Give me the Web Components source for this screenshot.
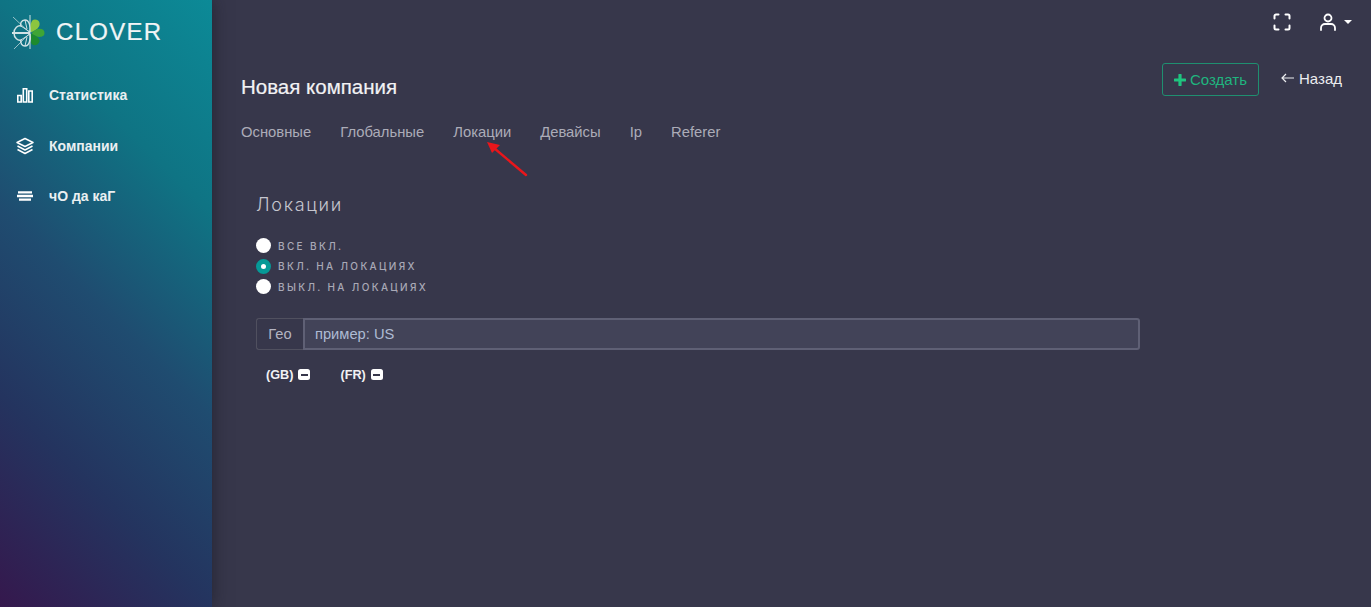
<!DOCTYPE html>
<html lang="ru">
<head>
<meta charset="utf-8">
<title>Clover</title>
<style>
  html, body { margin: 0; height: 100%; }
  body { background: #37374b; font-family: "Liberation Sans", Arial, sans-serif; overflow: hidden; }
</style>
</head>
<body>
<app-shell>
  <side-bar slot="side">
    <nav-item icon="chart">Статистика</nav-item>
    <nav-item icon="layers">Компании</nav-item>
    <nav-item icon="lines">чО да каГ</nav-item>
  </side-bar>
  <top-bar slot="top"></top-bar>
  <page-head slot="main">Новая компания</page-head>
  <tab-bar slot="main">
    <span>Основные</span><span>Глобальные</span><span>Локации</span><span>Девайсы</span><span>Ip</span><span>Referer</span>
  </tab-bar>
  <location-panel slot="main" title="Локации">
    <radio-option>все вкл.</radio-option>
    <radio-option checked>вкл. на локациях</radio-option>
    <radio-option>выкл. на локациях</radio-option>
    <geo-input slot="input" label="Гео" placeholder="пример: US"></geo-input>
    <geo-tag slot="tags">(GB)</geo-tag>
    <geo-tag slot="tags">(FR)</geo-tag>
  </location-panel>
</app-shell>

<script>
function define(name, html, cls) {
  const t = document.createElement('template');
  t.innerHTML = html;
  customElements.define(name, class extends (cls || HTMLElement) {
    constructor() {
      super();
      this.attachShadow({ mode: 'open' }).appendChild(t.content.cloneNode(true));
      if (this.init) this.init();
    }
  });
}

define('app-shell', `
  <style>
    :host { display: flex; height: 607px; width: 1371px; overflow: hidden; position: relative; }
    .side { flex: 0 0 212px; position: relative; z-index: 1; box-shadow: 0 0 16px rgba(20, 20, 30, .55); }
    .body { flex: 1; min-width: 0; display: flex; flex-direction: column; }
    .main { padding: 0 29px; display: flex; flex-direction: column; }
    .arrow { position: absolute; left: 485px; top: 140px; }
  </style>
  <div class="side"><slot name="side"></slot></div>
  <div class="body">
    <slot name="top"></slot>
    <div class="main"><slot name="main"></slot></div>
  </div>
  <svg class="arrow" width="46" height="40" viewBox="0 0 46 40">
    <path d="M41 35 L9 8" stroke="#e9161b" stroke-width="2.4" stroke-linecap="round"/>
    <path d="M2 2 L15 5 L7 13 Z" fill="#e9161b"/>
  </svg>
`);

define('side-bar', `
  <style>
    :host {
      display: block; height: 607px; box-sizing: border-box;
      background: linear-gradient(45deg, #35184d 0%, #24345f 26%, #1f4c70 49%, #0f7484 74%, #0c8a97 100%);
    }
    .brand { display: flex; align-items: center; height: 64px; padding-left: 12px; gap: 11px; }
    .name { color: #f1f5f6; font: 24px/1 "Liberation Sans", Arial, sans-serif; letter-spacing: 1.3px; -webkit-text-stroke: .2px #f1f5f6; }
    nav { display: flex; flex-direction: column; }
  </style>
  <div class="brand">
    <svg width="33" height="36" viewBox="0 0 33 36">
      <g stroke="#e6eff1" fill="none" opacity=".9">
        <path d="M18 1V35" stroke-width="1"/>
        <path d="M0 19H18" stroke-width="2"/>
        <path d="M1 3L18 19M2 35L18 19" stroke-width=".7"/>
        <path d="M18 18C19 12 17 6 13 6C9 6 8 10 9 12C6 11 2 14 2 19C2 24 6 27 9 26C8 29 10 32 13 32C17 32 19 26 18 20" stroke-width="1.500"/>
        <path d="M9 12C12 14 15 16 18 18M9 26C12 24 15 22 18 20M13 6L15 15M13 32L15 23" stroke-width="1"/>
      </g>
      <path d="M19 18.500C18 12 18.500 5.500 23 5.500C27.500 5.500 28.500 10 27 12.500C25.500 15.500 22 17 19 18.500Z" fill="#8cc63f"/>
      <path d="M20 19C23 14 32.500 12.500 32.500 19C32.500 24.500 23.500 23.500 20 20Z" fill="#3fa535"/>
      <path d="M19 20C23 20.500 28 24 27.500 27.500C26.500 32 19 32.500 19 28Z" fill="#1d8a2e"/>
    </svg>
    <span class="name">CLOVER</span>
  </div>
  <nav><slot></slot></nav>
`);

const navIcons = {
  chart: '<path d="M1.800 9.500h3.400v6.500H1.800zM7.300 2.800h3.400V16H7.300zM12.800 5h3.400v11h-3.400z" fill="none" stroke="#fff" stroke-width="1.600"/>',
  layers: '<path d="M9 1.500L17 5.500L9 9.500L1 5.500Z" fill="none" stroke="#fff" stroke-width="1.500" stroke-linejoin="round"/><path d="M1.500 9L9 13L16.500 9M1.500 12.500L9 16.500L16.500 12.500" fill="none" stroke="#fff" stroke-width="1.500" stroke-linejoin="round"/>',
  lines: '<path d="M2 5.300h14M1 9h16M3 12.700h12" stroke="#fff" stroke-width="2.300" fill="none"/>'
};

define('nav-item', `
  <style>
    :host { display: flex; align-items: center; height: 50.500px; padding-left: 16px; gap: 15px; color: #eaf0f2; font: bold 14px "Liberation Sans", Arial, sans-serif; position: relative; top: 6px; }
    svg { flex: 0 0 18px; }
  </style>
  <svg width="18" height="18" viewBox="0 0 18 18"></svg><slot></slot>
`, class extends HTMLElement {
  init() {
    this.shadowRoot.querySelector('svg').innerHTML = navIcons[this.getAttribute('icon')];
  }
});

define('top-bar', `
  <style>
    :host { display: flex; justify-content: flex-end; align-items: center; height: 44px; gap: 27px; padding-right: 19px; }
    .user { display: flex; align-items: center; gap: 7px; }
    .caret { width: 0; height: 0; border: 4px solid transparent; border-top-color: #fff; border-bottom: 0; }
    .full { margin-right: 1px; }
  </style>
  <svg class="full" width="18" height="18" viewBox="0 0 18 18" fill="none" stroke="#fff" stroke-width="2" stroke-linecap="round" stroke-linejoin="round">
    <path d="M1.500 5.500V3a1.500 1.500 0 0 1 1.500-1.500h2.500M12.500 1.500H15a1.500 1.500 0 0 1 1.500 1.500v2.500M16.500 12.500V15a1.500 1.500 0 0 1-1.500 1.500h-2.500M5.500 16.500H3a1.500 1.500 0 0 1-1.500-1.500v-2.500"/>
  </svg>
  <div class="user">
    <svg width="18" height="18" viewBox="0 0 18 18" fill="none" stroke="#fff" stroke-width="1.800" stroke-linecap="round">
      <circle cx="9" cy="5" r="3.500"/>
      <path d="M2 17v-2a4 4 0 0 1 4-4h6a4 4 0 0 1 4 4v2"/>
    </svg>
    <span class="caret"></span>
  </div>
`);

define('page-head', `
  <style>
    :host { display: flex; justify-content: space-between; align-items: flex-start; height: 60px; margin-top: 19px; }
    h1 { margin: 11px 0 0; font: 500 20.500px/1.300 "Liberation Sans", Arial, sans-serif; color: #f2f2f4; -webkit-text-stroke: .2px #f2f2f4; }
    .actions { display: flex; align-items: center; gap: 22px; }
    .create { display: flex; align-items: center; gap: 4px; box-sizing: border-box; width: 97px; height: 33px; justify-content: center; border: 1px solid #1f8f70; border-radius: 3px; color: #1fb57f; font-size: 15px; line-height: 30px; }
    .back { display: flex; align-items: center; gap: 5px; color: #ecedf0; font-size: 15px; position: relative; top: -1px; }
    .back svg { position: relative; top: -1px; }
  </style>
  <h1><slot></slot></h1>
  <div class="actions">
    <div class="create">
      <svg width="12" height="12" viewBox="0 0 12 12"><path d="M6 1v10M1 6h10" stroke="#1fc47f" stroke-width="3.200" stroke-linecap="round"/></svg>
      <span>Создать</span>
    </div>
    <div class="back">
      <svg width="13" height="10" viewBox="0 0 13 10" fill="none" stroke="#ecedf0" stroke-width="1.200"><path d="M13 5H1M5 1L1 5L5 9"/></svg>
      <span>Назад</span>
    </div>
  </div>
`);

define('tab-bar', `
  <style>
    :host { display: flex; gap: 29px; height: 49px; color: #acacb8; font: 14.800px/1.300 "Liberation Sans", Arial, sans-serif; }
  </style>
  <slot></slot>
`);

define('location-panel', `
  <style>
    :host { display: block; padding: 21px 0 0 15px; width: 884px; }
    h2 { margin: 0 0 19px; font: 300 18px/1.300 Inter, "Open Sans", sans-serif; letter-spacing: 1.700px; color: #c6c6cf; }
    .radios { display: flex; flex-direction: column; }
    .input { margin-top: 21px; }
    .tags { display: flex; gap: 30px; padding: 18px 0 0 10px; }
  </style>
  <h2></h2>
  <div class="radios"><slot></slot></div>
  <div class="input"><slot name="input"></slot></div>
  <div class="tags"><slot name="tags"></slot></div>
`, class extends HTMLElement {
  init() {
    this.shadowRoot.querySelector('h2').textContent = this.getAttribute('title');
  }
});

define('radio-option', `
  <style>
    :host { display: flex; align-items: center; gap: 7px; height: 20.500px; color: #a9a9b6; font: 500 10px Inter, "Open Sans", sans-serif; letter-spacing: 2.350px; text-transform: uppercase; }
    i { flex: 0 0 15px; height: 15px; border-radius: 50%; background: #fff; box-sizing: border-box; }
    :host([checked]) i { border: 5px solid #069a97; }
  </style>
  <i></i><slot></slot>
`);

define('geo-input', `
  <style>
    :host { display: flex; height: 32px; box-sizing: border-box; font: 14.700px "Liberation Sans", Arial, sans-serif; }
    .label { display: flex; align-items: center; justify-content: center; width: 47px; box-sizing: border-box; border: 1px solid #50505f; border-right: 0; border-radius: 3px 0 0 3px; color: #b4b4c2; }
    .field { flex: 1; display: flex; align-items: center; padding-left: 10px; background: #424358; border: 2px solid #5f6075; border-radius: 0 3px 3px 0; color: #aebbd4; }
  </style>
  <div class="label"></div>
  <div class="field"></div>
`, class extends HTMLElement {
  init() {
    this.shadowRoot.querySelector('.label').textContent = this.getAttribute('label');
    this.shadowRoot.querySelector('.field').textContent = this.getAttribute('placeholder');
  }
});

define('geo-tag', `
  <style>
    :host { display: inline-flex; align-items: center; gap: 5px; color: #f1f1f4; font: bold 12.700px "Liberation Sans", Arial, sans-serif; }
    i { width: 12px; height: 11px; border-radius: 2.500px; background: #fff; display: flex; align-items: center; justify-content: center; }
    i::after { content: ""; width: 7px; height: 2px; background: #37374b; }
  </style>
  <slot></slot><i></i>
`);
</script>
</body>
</html>
